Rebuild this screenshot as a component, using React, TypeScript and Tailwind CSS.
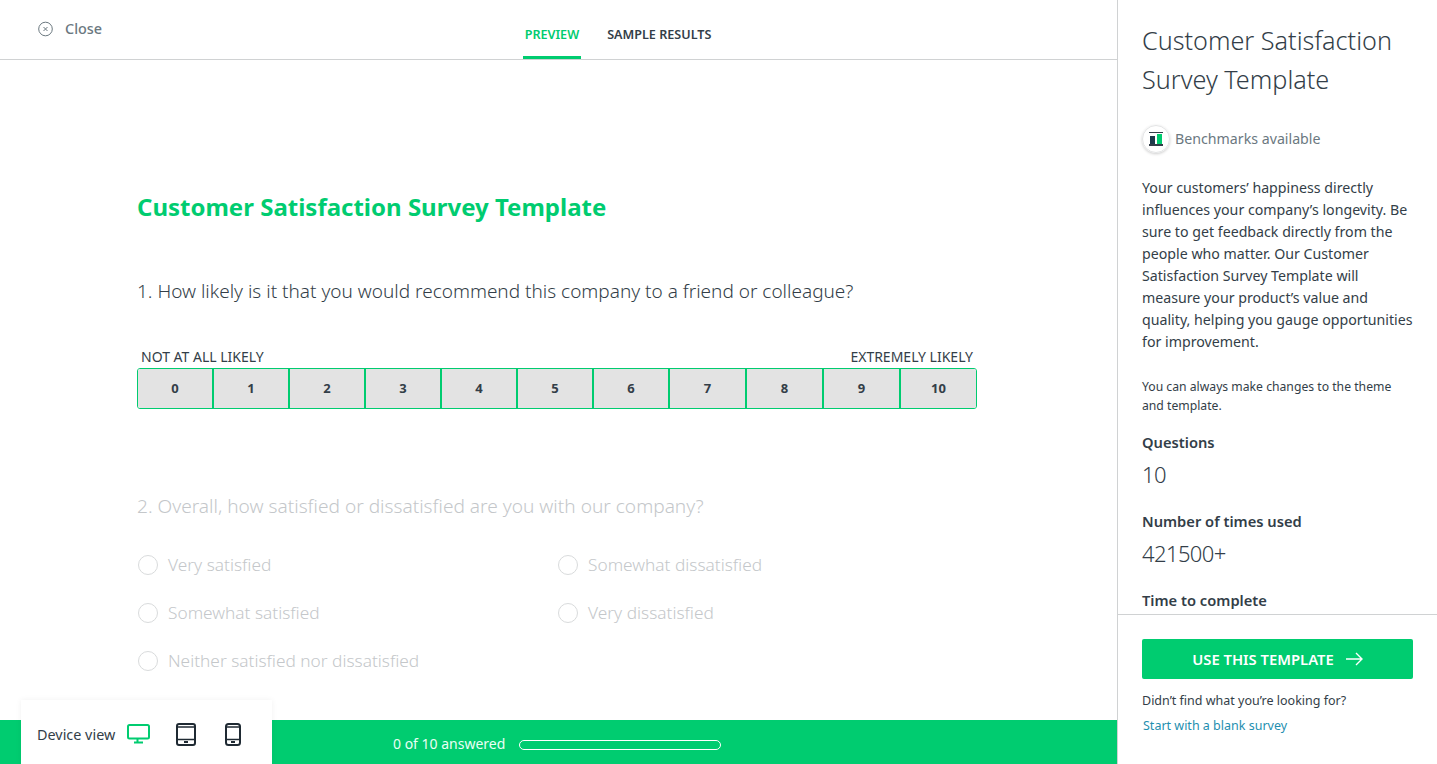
const font = "font-['Noto_Sans','Inter',sans-serif]";

const scale = ["0", "1", "2", "3", "4", "5", "6", "7", "8", "9", "10"];

function cellWidth(i: number) {
  if (i === 0) return "w-[74px]";
  if (i < 7) return "w-[76px]";
  if (i < 10) return "w-[77px]";
  return "flex-1";
}

function Radio({ label }: { label: string }) {
  return (
    <div className="flex h-[48px] items-center gap-[10px]">
      <span className="size-[20px] rounded-full border border-[#d9dbdc]" />
      <span className="text-[17.3px] font-light text-[#c4c7ca]">{label}</span>
    </div>
  );
}

export default function App() {
  return (
    <div className={`flex h-[764px] w-[1437px] overflow-hidden bg-white text-[#333e48] ${font}`}>
      <div className="relative flex min-w-0 flex-1 flex-col">
        {/* Header */}
        <div className="relative flex h-[60px] shrink-0 justify-center border-b border-[#d0d2d3] pl-[117px]">
          <div className="absolute left-[38px] top-[18px] flex items-center gap-[12px] text-[#6b787f]">
            <svg width="15" height="16" viewBox="0 0 15 16" fill="none" stroke="currentColor">
              <circle cx="7.5" cy="8" r="6.8" />
              <path d="M5.5 6l4 4M9.5 6l-4 4" />
            </svg>
            <span className="text-[14.4px] font-medium">Close</span>
          </div>
          <div className="flex gap-[26px] text-[12.6px] font-semibold">
            <div className="relative flex h-[59px] items-center px-[2px] pt-[12px] text-[#00cc70]">
              PREVIEW
              <span className="absolute inset-x-0 bottom-0 h-[3px] bg-[#00cc70]" />
            </div>
            <div className="flex h-[59px] items-center pt-[12px]">SAMPLE RESULTS</div>
          </div>
        </div>

        {/* Survey */}
        <div className="flex-1 pl-[137px] pr-[140px]">
          <h1 className="mt-[129px] text-[24px] font-bold leading-[36px] text-[#00cc70]">
            Customer Satisfaction Survey Template
          </h1>
          <p className="mt-[51px] text-[19px] font-light leading-[30px]">
            1. How likely is it that you would recommend this company to a friend or colleague?
          </p>
          <div className="mt-[42px] flex justify-between px-[4px] text-[14px] leading-[18px]">
            <span>NOT AT ALL LIKELY</span>
            <span>EXTREMELY LIKELY</span>
          </div>
          <div className="mt-[2px] flex h-[41px] overflow-hidden rounded-[3px] border border-[#00cc70]">
            {scale.map((n, i) => (
              <div
                key={n}
                className={`flex items-center justify-center bg-[#e3e3e3] text-[13px] font-bold ${cellWidth(i)} ${
                  i > 0 ? "border-l-2 border-[#00cc70]" : ""
                }`}
              >
                {n}
              </div>
            ))}
          </div>
          <p className="mt-[82px] text-[19.1px] font-light leading-[30px] text-[#c4c7ca]">
            2. Overall, how satisfied or dissatisfied are you with our company?
          </p>
          <div className="mt-[20px] grid grid-cols-[420px_1fr] pl-[1px]">
            <Radio label="Very satisfied" />
            <Radio label="Somewhat dissatisfied" />
            <Radio label="Somewhat satisfied" />
            <Radio label="Very dissatisfied" />
            <Radio label="Neither satisfied nor dissatisfied" />
          </div>
        </div>

        {/* Footer bar */}
        <div className="absolute inset-x-0 bottom-0 flex h-[44px] items-center bg-[#00cc70] pl-[393px] pt-[5px] text-[14px] text-[#e9fff5]">
          <span className="w-[126px] pb-[2px]">0 of 10 answered</span>
          <div className="h-[10px] w-[202px] rounded-full border border-white" />
        </div>

        {/* Device view */}
        <div className="absolute bottom-0 left-[21px] flex h-[64px] w-[251px] items-center bg-white pb-[2px] pl-[16px] pt-[6px] shadow-[0_0_6px_rgba(0,0,0,0.06)]">
          <span className="w-[90px] pt-[2px] text-[14.4px]">Device view</span>
          <svg className="text-[#00cc70]" width="23" height="20" viewBox="0 0 23 20" fill="none" stroke="currentColor" strokeWidth="2">
            <rect x="1" y="1" width="21" height="13.5" rx="1.5" />
            <path d="M10.5 15v3M7 18.5h9" />
          </svg>
          <svg className="ml-[26px]" width="20" height="23" viewBox="0 0 20 23" fill="none" stroke="#1f2a33" strokeWidth="2">
            <rect x="1" y="1" width="18" height="21" rx="2" />
            <path d="M1 4h18M1 16.5h18" strokeWidth="1.5" />
            <rect x="8" y="18" width="4" height="2" fill="#1f2a33" stroke="none" />
          </svg>
          <svg className="ml-[29px]" width="16" height="23" viewBox="0 0 16 23" fill="none" stroke="#1f2a33" strokeWidth="2">
            <rect x="1" y="1" width="14" height="21" rx="2.5" />
            <path d="M1 4h14M1 16.5h14" strokeWidth="1.5" />
            <rect x="6" y="18" width="4" height="2" fill="#1f2a33" stroke="none" />
          </svg>
        </div>
      </div>

      {/* Sidebar */}
      <aside className="flex w-[320px] shrink-0 flex-col border-l border-[#d0d2d3]">
        <div className="min-h-0 flex-1 overflow-hidden pl-[24px] pr-[20px] pt-[21px]">
          <h2 className="text-[25.2px] font-light leading-[39px]">
            Customer Satisfaction Survey Template
          </h2>
          <div className="mt-[26px] flex items-center gap-[5px]">
            <div className="flex size-[28px] items-center justify-center rounded-full border border-[#e3e4e5] shadow-[0_1px_3px_rgba(0,0,0,0.2)]">
              <svg width="16" height="16" viewBox="0 0 16 16">
                <path d="M1 1h14v1H1z" fill="#333e48" />
                <rect x="2" y="5" width="5" height="8" fill="#1d3a4a" />
                <rect x="9" y="3" width="5" height="10" fill="#00cc70" />
                <rect x="1" y="13" width="14" height="2" fill="#333e48" />
              </svg>
            </div>
            <span className="text-[14.2px] text-[#6b787f]">Benchmarks available</span>
          </div>
          <p className="mt-[24px] text-[14.2px] leading-[22px]">
            Your customers’ happiness directly influences your company’s longevity. Be sure to get feedback directly from the people who matter. Our Customer Satisfaction Survey Template will measure your product’s value and quality, helping you gauge opportunities for improvement.
          </p>
          <p className="mt-[24px] pr-[20px] text-[12.2px] leading-[19px]">
            You can always make changes to the theme and template.
          </p>
          <p className="mt-[17px] text-[14.7px] font-semibold leading-[20px]">Questions</p>
          <p className="mt-[5px] text-[22px] font-light leading-[34px] tracking-[-0.6px]">10</p>
          <p className="mt-[20px] text-[14.7px] font-semibold leading-[20px]">Number of times used</p>
          <p className="mt-[5px] text-[22px] font-light leading-[34px] tracking-[-0.6px]">421500+</p>
          <p className="mt-[20px] text-[14.7px] font-semibold leading-[20px]">Time to complete</p>
        </div>
        <div className="h-[150px] shrink-0 border-t border-[#d0d2d3] px-[24px] pt-[24px]">
          <button className="flex h-[40px] w-full items-center justify-center gap-[12px] rounded-[2px] bg-[#00cc70] text-[14.8px] font-semibold text-white">
            USE THIS TEMPLATE
            <svg width="17" height="14" viewBox="0 0 17 14" fill="none" stroke="currentColor" strokeWidth="1.4">
              <path d="M0 7h16M10 1l6 6-6 6" />
            </svg>
          </button>
          <p className="mt-[13px] text-[12.5px] leading-[18px]">Didn’t find what you’re looking for?</p>
          <a className="mt-[7px] block pl-[1px] text-[12.5px] leading-[18px] text-[#1f8fb0]">Start with a blank survey</a>
        </div>
      </aside>
    </div>
  );
}
